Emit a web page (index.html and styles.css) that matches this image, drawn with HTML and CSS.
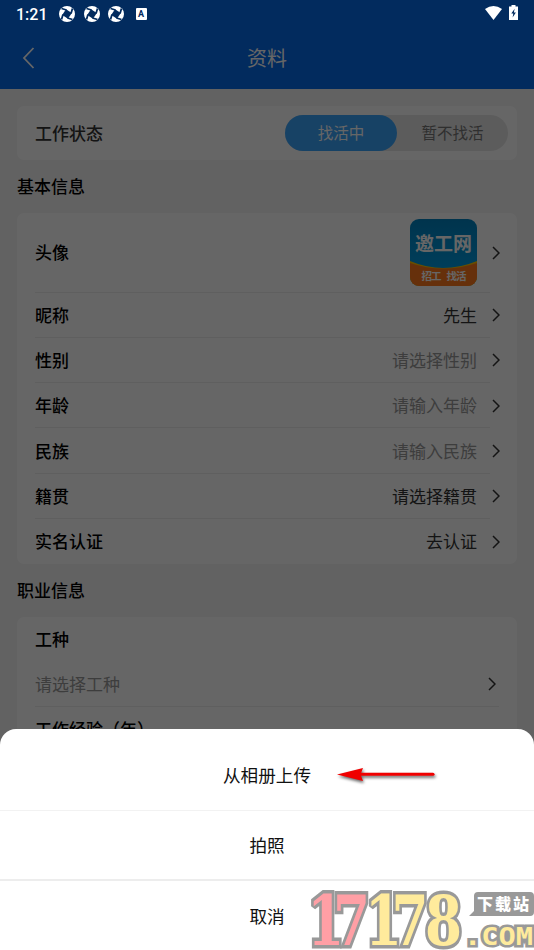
FILE: index.html
```html
<!DOCTYPE html>
<html lang="zh-CN">
<head>
<meta charset="utf-8">
<title>资料</title>
<link rel="stylesheet" href="styles.css">
</head>
<body>
<svg class="defs" width="0" height="0">
  <defs>
    <symbol id="chev" viewBox="0 0 8 14"><path d="M1 1 L7 7 L1 13" fill="none" stroke="currentColor" stroke-width="1.5"/></symbol>
    <symbol id="orb" viewBox="0 0 16 16"><circle cx="8" cy="8" r="8" fill="#fff"/><path d="M7 3.2 L12.8 7 L9 12.8 L3.2 9 Z" fill="#022b5e"/><path d="M7.5 4 L2.5 2.5 M12 7.5 L13.5 2.5 M8.5 12 L13.5 13.5 M4 8.5 L2.5 13.5" stroke="#022b5e" stroke-width="1.8"/></symbol>
  </defs>
</svg>
<div class="phone">
  <header class="top">
    <div class="nav">
      <svg class="back" viewBox="0 0 12 22"><path d="M11 1 L1.5 11 L11 21" fill="none" stroke="currentColor" stroke-width="1.8"/></svg>
      <h1>资料</h1>
    </div>
  </header>
  <main>
    <section class="card status">
      <span>工作状态</span>
      <div class="toggle"><span class="on">找活中</span><span class="off">暂不找活</span></div>
    </section>
    <h2>基本信息</h2>
    <section class="card list">
      <div class="row tall"><b>头像</b>
        <svg class="avatar" viewBox="0 0 67 67">
          <defs>
            <clipPath id="round"><rect width="67" height="67" rx="9"/></clipPath>
            <linearGradient id="sky" x2="0" y2="1"><stop offset="0" stop-color="#0082c0"/><stop offset="1" stop-color="#00a5ee"/></linearGradient>
          </defs>
          <g clip-path="url(#round)">
            <rect width="67" height="67" fill="url(#sky)"/>
            <path d="M0 42 Q33 56 67 42 V67 H0Z" fill="#ffc400"/>
            <path d="M0 44 Q33 55 67 44 V67 H0Z" fill="#ff781c"/>
          </g>
          <text x="33.5" y="32" font-size="19" textLength="57">邀工网</text>
          <text x="21.5" y="61" font-size="10.5" textLength="20">招工</text>
          <text x="46.5" y="61" font-size="10.5" textLength="20">找活</text>
        </svg>
        <svg class="chev"><use href="#chev"/></svg></div>
      <div class="row"><b>昵称</b><span>先生</span><svg class="chev"><use href="#chev"/></svg></div>
      <div class="row"><b>性别</b><span class="hint">请选择性别</span><svg class="chev"><use href="#chev"/></svg></div>
      <div class="row"><b>年龄</b><span class="hint">请输入年龄</span><svg class="chev"><use href="#chev"/></svg></div>
      <div class="row"><b>民族</b><span class="hint">请输入民族</span><svg class="chev"><use href="#chev"/></svg></div>
      <div class="row"><b>籍贯</b><span>请选择籍贯</span><svg class="chev"><use href="#chev"/></svg></div>
      <div class="row"><b>实名认证</b><span>去认证</span><svg class="chev"><use href="#chev"/></svg></div>
    </section>
    <h2>职业信息</h2>
    <section class="card job">
      <b>工种</b>
      <div class="pick"><span class="hint">请选择工种</span><svg class="chev"><use href="#chev"/></svg></div>
      <b>工作经验（年）</b>
    </section>
  </main>
  <div class="scrim"></div>
  <div class="sysbar">
    <span class="time">1:21</span>
    <svg class="orb"><use href="#orb"/></svg>
    <svg class="orb"><use href="#orb"/></svg>
    <svg class="orb"><use href="#orb"/></svg>
    <span class="abox">A</span>
    <svg class="wifi" viewBox="0 0 17 14"><path d="M0 3 Q8.5 -3 17 3 L8.5 14Z" fill="#fff"/></svg>
    <svg class="batt" viewBox="0 0 9 15"><path d="M2.5 0h4v1.5H9V15H0V1.5h2.5z" fill="#fff"/><path d="M5.6 3.8 L2.3 8.6H4.3L3.6 12.6L6.9 7.6H4.9z" fill="#022b5e"/></svg>
  </div>
  <div class="sheet">
    <div class="opt first">从相册上传</div>
    <div class="opt second">拍照</div>
    <div class="opt">取消</div>
  </div>
  <svg class="arrow" viewBox="0 0 110 26">
    <g class="shadow"><path d="M28 11.3 H101" stroke="#f00000" stroke-width="3" stroke-linecap="round"/><path d="M5 11.5 L31 5 L28.5 11.5 L31 18Z" fill="#f00000"/></g>
  </svg>
  <svg class="mark" viewBox="0 0 226 62">
    <g transform="scale(.76 1)">
      <text class="digits" x="-1 33 75 110 154" y="57"><tspan class="red">17</tspan>178</text>
    </g>
    <text class="com" x="156" y="57" textLength="69" lengthAdjust="spacingAndGlyphs">.COM</text>
    <path d="M170 4 H222 Q226 4 226 8 V24 Q226 28 222 28 H161 L166 23 V8 Q166 4 170 4Z" fill="#999"/>
    <text class="site" x="169" y="22" textLength="52">下载站</text>
  </svg>
</div>
</body>
</html>
```

FILE: styles.css
```css
* { box-sizing: border-box; }
body { margin: 0; font-family: "Noto Sans CJK SC", sans-serif; font-size: 17px; color: #333; }
.defs { position: absolute; }
.phone { position: relative; width: 534px; height: 950px; overflow: hidden; background: #f5f5f5; }
.top { height: 89px; padding-top: 28px; background: #056bec; }
.nav { display: flex; align-items: center; height: 60px; padding-left: 22px; color: #fff; }
.back { width: 13px; height: 22px; }
h1 { flex: 1; margin: 0 35px 0 0; text-align: center; font-size: 20px; font-weight: 400; line-height: 30px; }
main { padding: 17px 17px 0; }
.card { background: #fff; border-radius: 7px; }
.status { display: flex; align-items: center; justify-content: space-between; height: 54px; padding: 0 9px 0 18px; font-weight: 500; }
.status > span { margin-top: -2px; }
.toggle { display: flex; width: 223px; height: 36px; border-radius: 18px; background: #e6e6e6; font-size: 15.5px; font-weight: 400; line-height: 35px; text-align: center; }
.on { width: 112px; border-radius: 18px; background: #3ba5fc; color: #fff; }
.off { flex: 1; color: #777; }
h2 { margin: 0; height: 53px; font-size: 17px; font-weight: 500; line-height: 51px; color: #000; }
.list { padding: 0 0 0 18px; height: 351px; }
.row { display: flex; align-items: center; height: 45.3px; padding-right: 17px; color: #333; background: linear-gradient(#eee, #eee) left bottom / 455px 1px no-repeat; }
.row:last-child { background: none; }
.tall { height: 79.5px; }
b { font-weight: 500; color: #000; }
.row b { flex: 1; }
.row b, .row span { margin-top: -2px; }
.row .chev { margin-left: 15px; }
.chev { width: 8px; height: 14px; color: #333; }
.hint, .row .hint { color: #999; }
.avatar { width: 67px; height: 67px; }
.avatar text { fill: #fff; font-weight: 700; text-anchor: middle; }
.job { height: 200px; padding: 0 18px; line-height: 43px; }
.job b { display: block; height: 45px; }
.pick { display: flex; align-items: center; justify-content: space-between; height: 45px; padding-right: 3px; border-bottom: 1px solid #eee; }
.pick .hint { margin-top: -1px; }
.scrim { position: absolute; inset: 0; background: rgba(0, 0, 0, .6); }
.sysbar { position: absolute; top: 0; left: 0; display: flex; align-items: center; width: 534px; height: 28px; padding: 0 16px; color: #fff; }
.time { width: 43px; font: 500 16px Roboto, sans-serif; }
.orb { width: 16px; height: 16px; margin-right: 8.5px; }
.abox { width: 11px; height: 12px; margin-left: 3px; border-radius: 1px; background: #fff; color: #022b5e; font: 700 9px/12px Roboto, sans-serif; text-align: center; }
.wifi { width: 17px; height: 14px; margin: -3px 7px 0 auto; }
.batt { width: 9px; height: 15px; margin-top: -3px; }
.sheet { position: absolute; left: 0; bottom: 0; width: 534px; height: 221px; border-radius: 16px 16px 0 0; background: #fff; color: #111; font-size: 17.6px; }
.opt { display: flex; align-items: center; justify-content: center; height: 70px; padding-bottom: 2px; }
.first { height: 82px; padding-top: 12px; border-bottom: 1px solid #f2f2f2; }
.second { height: 70px; border-bottom: 2px solid #ededed; }
.arrow { position: absolute; left: 332px; top: 763px; width: 110px; height: 26px; }
.shadow { filter: drop-shadow(1.5px 2px 1.5px rgba(0, 0, 0, .6)); }
.mark { position: absolute; left: 308px; top: 888px; width: 226px; height: 62px; overflow: visible; }
.digits { font: 700 70px "DejaVu Serif", serif; fill: #ffeb9c; stroke: #999; stroke-width: 7px; stroke-linejoin: miter; stroke-miterlimit: 2; paint-order: stroke; }
.red { fill: #ff9fa5; }
.com { font: 700 24px "DejaVu Sans Mono", monospace; fill: #ffeb9c; stroke: #999; stroke-width: 5px; paint-order: stroke; }
.site { fill: #fff; font-size: 16px; font-weight: 900; }
```
